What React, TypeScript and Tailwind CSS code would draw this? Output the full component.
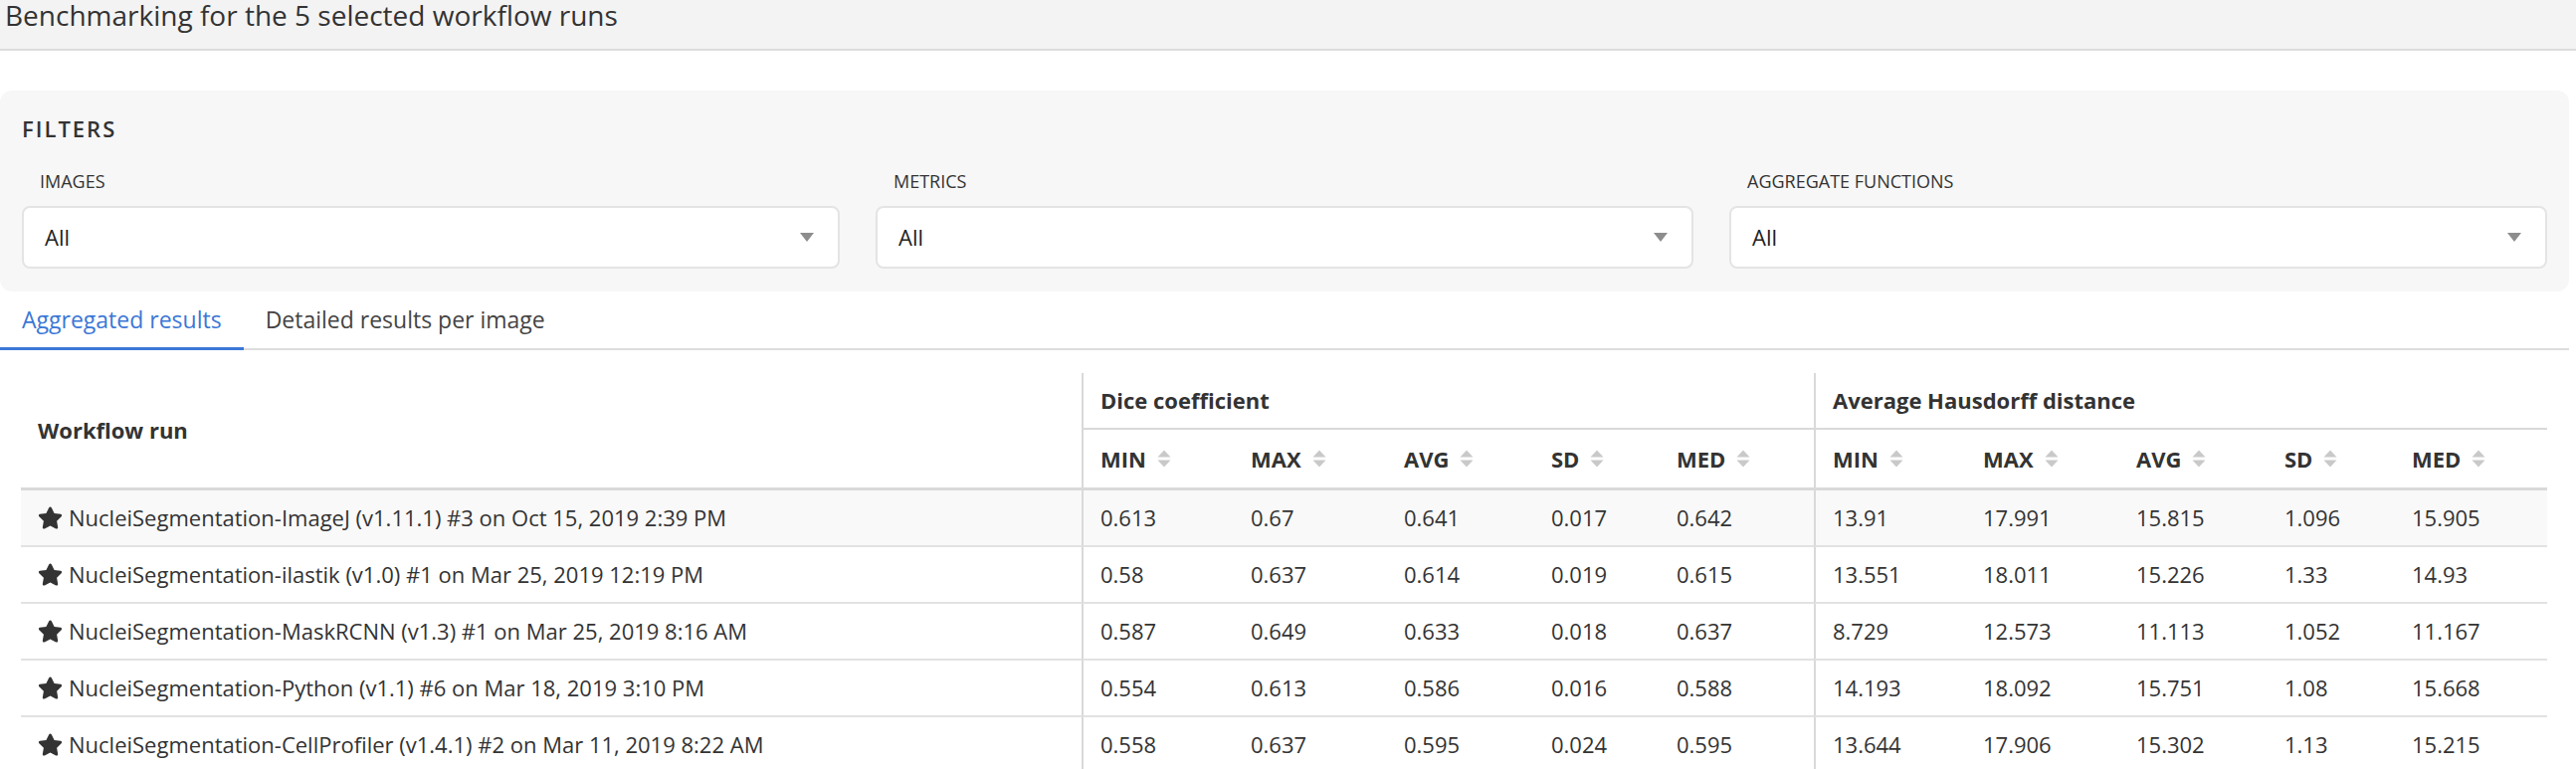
import { FaStar } from 'react-icons/fa'

const runs = [
  {
    name: 'NucleiSegmentation-ImageJ (v1.11.1) #3 on Oct 15, 2019 2:39 PM',
    dice: ['0.613', '0.67', '0.641', '0.017', '0.642'],
    haus: ['13.91', '17.991', '15.815', '1.096', '15.905'],
  },
  {
    name: 'NucleiSegmentation-ilastik (v1.0) #1 on Mar 25, 2019 12:19 PM',
    dice: ['0.58', '0.637', '0.614', '0.019', '0.615'],
    haus: ['13.551', '18.011', '15.226', '1.33', '14.93'],
  },
  {
    name: 'NucleiSegmentation-MaskRCNN (v1.3) #1 on Mar 25, 2019 8:16 AM',
    dice: ['0.587', '0.649', '0.633', '0.018', '0.637'],
    haus: ['8.729', '12.573', '11.113', '1.052', '11.167'],
  },
  {
    name: 'NucleiSegmentation-Python (v1.1) #6 on Mar 18, 2019 3:10 PM',
    dice: ['0.554', '0.613', '0.586', '0.016', '0.588'],
    haus: ['14.193', '18.092', '15.751', '1.08', '15.668'],
  },
  {
    name: 'NucleiSegmentation-CellProfiler (v1.4.1) #2 on Mar 11, 2019 8:22 AM',
    dice: ['0.558', '0.637', '0.595', '0.024', '0.595'],
    haus: ['13.644', '17.906', '15.302', '1.13', '15.215'],
  },
]

const aggregates = ['MIN', 'MAX', 'AVG', 'SD', 'MED']
const filters = ['IMAGES', 'METRICS', 'AGGREGATE FUNCTIONS']

const grid =
  'grid grid-cols-[1066px_151px_154px_148px_126px_157px_151px_154px_149px_128px_155px]'

function SortIcon() {
  return (
    <svg width="14" height="18" viewBox="0 0 14 18" className="ml-[11px] shrink-0">
      <path d="M0.5 7.5 L7 0.5 L13.5 7.5 Z" fill="#c9c9c9" />
      <path d="M0.5 10.5 L7 17.5 L13.5 10.5 Z" fill="#c9c9c9" />
    </svg>
  )
}

function Select({ label }: { label: string }) {
  return (
    <div className="flex flex-col">
      <label className="pl-[18px] text-[18px] leading-[24px] text-[#333]">{label}</label>
      <div className="mt-[13px] flex h-[63px] items-center justify-between rounded-[8px] border-2 border-[#e4e4e4] bg-white pl-[21px] pr-[24px]">
        <span className="text-[22px] text-[#222]">All</span>
        <svg width="14" height="9" viewBox="0 0 14 9">
          <path d="M0 0 L14 0 L7 9 Z" fill="#8d8d8d" />
        </svg>
      </div>
    </div>
  )
}

export default function App() {
  return (
    <div className="min-h-screen bg-white font-['Open_Sans',sans-serif] text-[#333]">
      <div className="h-[51px] border-b-2 border-[#dcdcdc] bg-[#f3f3f3] pl-[5px]">
        <h1 className="text-[28px] leading-[30px] text-[#333]">
          Benchmarking for the 5 selected workflow runs
        </h1>
      </div>

      <div className="w-[2582px]">
        <section className="mt-[40px] rounded-[12px] bg-[#f7f7f7] px-[22px] pb-[23px] pt-[22px]">
          <h6 className="text-[22px] font-semibold leading-[33px] tracking-[2px] text-[#333]">
            FILTERS
          </h6>
          <div className="mt-[24px] grid grid-cols-3 gap-x-[36px]">
            {filters.map((f) => (
              <Select key={f} label={f} />
            ))}
          </div>
        </section>

        <div className="mt-[12px] flex border-b-2 border-[#dddddd]">
          <button className="-mb-[2px] border-b-[3px] border-[#3b77d6] px-[22px] pb-[11px] text-[23px] leading-[33px] text-[#3b77d6]">
            Aggregated results
          </button>
          <button className="-mb-[2px] border-b-[3px] border-transparent px-[22px] pb-[11px] text-[23px] leading-[33px] text-[#444]">
            Detailed results per image
          </button>
        </div>

        <div className={`ml-[21px] mt-[23px] w-[2539px] text-[22px] ${grid}`}>
          <div className="row-span-2 flex items-center border-b-[3px] border-[#d9d9d9] pl-[17px] font-bold">
            Workflow run
          </div>
          <div className="col-span-5 flex h-[57px] items-center border-b-2 border-l-2 border-[#d9d9d9] pl-[17px] font-bold">
            Dice coefficient
          </div>
          <div className="col-span-5 flex h-[57px] items-center border-b-2 border-l-2 border-[#d9d9d9] pl-[17px] font-bold">
            Average Hausdorff distance
          </div>
          {[0, 1].map((g) =>
            aggregates.map((a, i) => (
              <div
                key={`${g}-${a}`}
                className={`flex h-[61px] items-center border-b-[3px] border-[#d9d9d9] font-bold ${
                  i === 0 ? 'border-l-2 pl-[17px]' : 'pl-[19px]'
                }`}
              >
                {a}
                <SortIcon />
              </div>
            ))
          )}

          {runs.map((run, r) => {
            const bg = r === 0 ? 'bg-[#f9f9f9]' : 'bg-white'
            return [
              <div
                key={`${r}-name`}
                className={`flex h-[57px] items-center border-b-2 border-[#e2e2e2] pl-[17px] ${bg}`}
              >
                <FaStar className="h-[23px] w-[25px] shrink-0 text-[#333]" />
                <span className="ml-[6px]">{run.name}</span>
              </div>,
              ...[...run.dice, ...run.haus].map((v, i) => (
                <div
                  key={`${r}-${i}`}
                  className={`flex h-[57px] items-center border-b-2 border-[#e2e2e2] ${bg} ${
                    i % 5 === 0 ? 'border-l-2 border-l-[#d9d9d9] pl-[17px]' : 'pl-[19px]'
                  }`}
                >
                  {v}
                </div>
              )),
            ]
          })}
        </div>
      </div>
    </div>
  )
}
